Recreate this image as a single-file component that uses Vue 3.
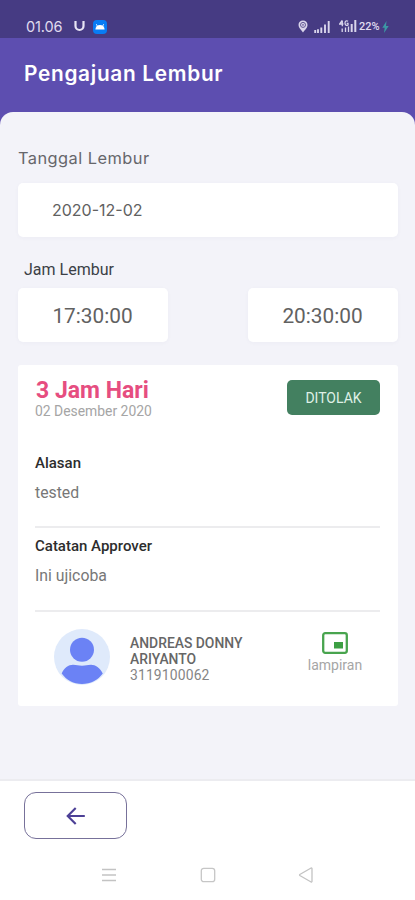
<script setup>
const start = '17:30:00'
const end = '20:30:00'
</script>

<template>
  <div class="screen">
    <div class="status">
      <span class="clock">01.06</span>
      <svg class="carrier" viewBox="0 0 12 11">
        <path d="M1.500 0v5a4 4 0 0 0 8 0V0" fill="none" stroke="#e8e5f5" stroke-width="2.200" />
      </svg>
      <svg class="app-icon" viewBox="0 0 14 14">
        <rect width="14" height="14" rx="4" fill="#087cf4" />
        <path d="M2.4 9.4a4.6 4.4 0 0 1 9.2 0z" fill="#fff" />
        <path d="M4.3 6 3.3 4.2M9.7 6l1-1.8" stroke="#fff" stroke-width=".9" />
      </svg>
      <span class="grow"></span>
      <svg class="pin" viewBox="0 0 10 13">
        <path d="M5 .5C2.300.5.5 2.200.5 4.900.5 8 3 9.500 5 12.500 7 9.500 9.500 8 9.500 4.900 9.500 2.200 7.700.5 5 .5z" fill="#d9d5eb" />
        <circle cx="5" cy="4.900" r="2.500" fill="none" stroke="#625894" stroke-width="1" />
        <circle cx="5" cy="4.900" r=".8" fill="#625894" />
      </svg>
      <svg class="signal" viewBox="0 0 16 12">
        <path d="M1.200 12V9M4 12V8.300M7.300 12V6.500M11 12V3.500M14.700 12V0" stroke="#d9d5eb" stroke-width="1.900" />
      </svg>
      <svg class="signal4g" viewBox="0 0 18 13">
        <path d="M3.200.5.7 4h3.700M3.300.5v5.700M9 1.300C7.500.2 6 1 6 3s1.500 3 3 2V3.300H7.700M3.200 12V8.500M6.500 12V7.500M9.500 12V6.500" fill="none" stroke="#d9d5eb" stroke-width="1.300" />
        <path d="M12.700 12V4M16.300 12V0" stroke="#d9d5eb" stroke-width="2" />
      </svg>
      <span class="battery">22%</span>
      <svg class="bolt" viewBox="0 0 7 12"><path d="M4.500 0 .3 6.700h2.400L2 12l4.700-7H4z" fill="#3c98a5" /></svg>
    </div>

    <header class="header"><h1>Pengajuan Lembur</h1></header>

    <div class="backdrop">
      <main class="sheet">
        <label class="label-date">Tanggal Lembur</label>
        <div class="field date">2020-12-02</div>
        <label class="label-time">Jam Lembur</label>
        <div class="times">
          <div class="field time">{{ start }}</div>
          <div class="field time">{{ end }}</div>
        </div>

        <section class="card">
          <div class="card-top">
            <div class="summary">
              <h2>3 Jam Hari</h2>
              <p>02 Desember 2020</p>
            </div>
            <span class="badge">DITOLAK</span>
          </div>
          <div class="note first">
            <h3>Alasan</h3>
            <p>tested</p>
          </div>
          <div class="note second">
            <h3>Catatan Approver</h3>
            <p>Ini ujicoba</p>
          </div>
          <div class="person">
            <svg class="avatar" viewBox="0 0 56 56">
              <circle cx="28" cy="28" r="28" fill="#dfeafb" />
              <circle cx="28" cy="20.800" r="12" fill="#6b82f5" />
              <path d="M7.700 44.500C10 39 14.500 35.700 19 35.700C23 35.700 24 36.700 28 36.700S33 35.700 37 35.700C41.500 35.700 46 39 48.800 44.500C44 51 36.500 55 28 55S12.500 51 7.700 44.500z" fill="#6b82f5" />
            </svg>
            <div class="who">
              <strong>ANDREAS DONNY</strong>
              <strong>ARIYANTO</strong>
              <span>3119100062</span>
            </div>
            <div class="attachment">
              <svg viewBox="0 0 26 22">
                <rect x="1.200" y="1.200" width="23.600" height="19.600" rx="2" fill="none" stroke="#48a44e" stroke-width="2.300" />
                <rect x="12" y="10" width="9" height="6.500" fill="#3c9f43" />
              </svg>
              <span>lampiran</span>
            </div>
          </div>
        </section>
      </main>
    </div>

    <footer class="footer">
      <button class="back" aria-label="Kembali">
        <svg viewBox="0 0 20 18">
          <path d="M18.800 9H2M9.700 1 1.700 9l8 8" fill="none" stroke="#4d4096" stroke-width="2.100" />
        </svg>
      </button>
      <div class="nav">
        <svg viewBox="0 0 16 16"><path d="M1 2.500h14M1 8h14M1 13.500h14" stroke="#c3c3c3" stroke-width="1.300" /></svg>
        <svg viewBox="0 0 16 16"><rect x="1.300" y="1.300" width="13.400" height="13.400" rx="2.500" fill="none" stroke="#c6c6c6" stroke-width="1.300" /></svg>
        <svg viewBox="0 0 16 16"><path d="M14 1.500v13a.6.6 0 0 1-.9.500L1.800 8.500a.6.6 0 0 1 0-1L13.100 1a.6.6 0 0 1 .9.500z" fill="none" stroke="#c3c3c3" stroke-width="1.300" /></svg>
      </div>
    </footer>
  </div>
</template>

<style>
body { margin: 0; }
</style>

<style scoped>
* { box-sizing: border-box; }
h1, h2, h3, p { margin: 0; }
.screen {
  width: 415px;
  height: 900px;
  display: flex;
  flex-direction: column;
  background: #f3f3f9;
  font-family: Roboto, "Liberation Sans", sans-serif;
  overflow: hidden;
  white-space: nowrap;
}
.status {
  height: 38px;
  padding: 15px 26px 0;
  display: flex;
  align-items: center;
  background: #463b83;
  color: #e0dcf0;
}
.clock { width: 48px; font: 400 14.5px/22px Inter, sans-serif; letter-spacing: -.1px; }
.carrier { width: 12px; height: 11px; margin-right: 7px; }
.app-icon { width: 14px; height: 14px; }
.grow { flex: 1; }
.pin { width: 10px; height: 13px; margin-right: 6px; }
.signal { width: 16px; height: 12px; margin-right: 9px; }
.signal4g { width: 18px; height: 13px; margin-right: 2px; }
.battery { width: 23px; font: 500 11px/22px Roboto, sans-serif; }
.bolt { width: 7px; height: 12px; }
.header { height: 74px; padding: 21px 24px 0; background: #5d4eb0; }
h1 { font: 600 20.8px/30px Inter, sans-serif; color: #fff; letter-spacing: .7px; }
.backdrop { background: linear-gradient(#5d4eb0 20px, #f3f3f9 20px); flex: none; }
.sheet {
  height: 667px;
  padding: 34px 17px 0 18px;
  border-radius: 13px 13px 0 0;
  background: #f3f3f9;
  display: flex;
  flex-direction: column;
}
.label-date { height: 37px; font: 400 16.4px/25px Inter, sans-serif; color: #66666b; letter-spacing: .45px; }
.field {
  height: 54px;
  background: #fff;
  border-radius: 5px;
  box-shadow: 0 1px 4px rgba(60, 60, 110, .035);
  color: #616161;
}
.date { padding-left: 34px; font: 400 16px/55px Inter, sans-serif; }
.label-time { height: 51px; padding: 21px 0 0 6px; font-size: 16px; line-height: 24px; color: #3b4046; }
.times { display: flex; justify-content: space-between; }
.time { width: 150px; padding-right: 1px; text-align: center; font-size: 20.8px; line-height: 56px; }
.card { margin-top: 23px; height: 341px; padding: 0 18px 0 17px; background: #fff; border-radius: 3px; }
.card-top { height: 82px; padding-top: 15px; display: flex; justify-content: space-between; align-items: flex-start; }
.summary h2 { padding-left: 1px; font-size: 23px; line-height: 22px; font-weight: 700; color: #e64d80; }
.summary p { font-size: 13.9px; line-height: 18px; color: #a5a5a5; }
.badge { width: 93px; height: 35px; border-radius: 5px; background: #438060; color: #dff0e6; text-align: center; font-size: 14px; line-height: 36px; }
.note { border-bottom: 2px solid #ececee; }
.first { height: 81px; padding-top: 4px; }
.second { height: 84px; padding-top: 6px; }
.note h3 { font-size: 15px; line-height: 24px; font-weight: 500; color: #2d2d2d; }
.note p { padding-top: 5px; font-size: 15.8px; line-height: 26px; color: #777; }
.person { display: flex; align-items: flex-start; padding: 17px 0 0 19px; }
.avatar { flex: none; width: 56px; height: 56px; }
.who { flex: none; display: flex; flex-direction: column; width: 158px; margin-left: 20px; padding-top: 6px; font-size: 13.9px; line-height: 16px; color: #858585; }
.who strong { font-weight: 500; color: #666; }
.who span { letter-spacing: .15px; }
.attachment { flex: none; display: flex; flex-direction: column; align-items: center; width: 94px; padding-top: 3px; }
.attachment svg { width: 26px; height: 22px; }
.attachment span { font-size: 14px; line-height: 22px; color: #a6a6a6; }
.footer { height: 121px; background: #fff; border-top: 2px solid #ececf0; padding: 11px 24px 0; }
.back { width: 103px; height: 47px; padding: 0; display: flex; align-items: center; justify-content: center; border: 1px solid #77719a; border-radius: 12px; background: #fff; }
.back svg { width: 20px; height: 18px; }
.nav { display: flex; justify-content: space-between; padding: 28px 77px 0; }
.nav svg { width: 16px; height: 16px; }
</style>
